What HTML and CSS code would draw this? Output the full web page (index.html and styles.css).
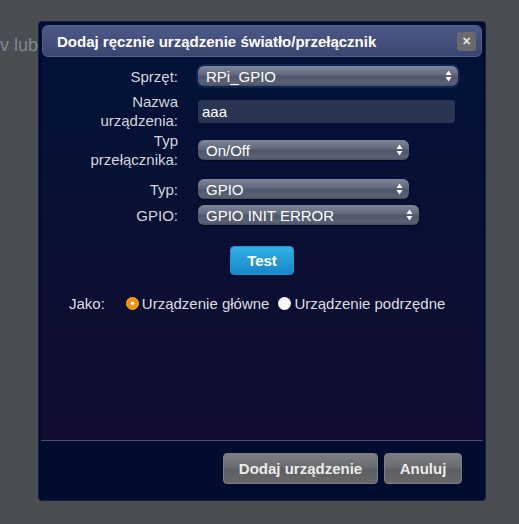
FILE: index.html
```html
<!DOCTYPE html>
<html lang="pl">
<head>
<meta charset="utf-8">
<title>Dodaj urządzenie</title>
<link rel="stylesheet" href="styles.css">
</head>
<body>
<div class="backdrop-text">v lub</div>
<div class="dialog">
  <div class="titlebar">
    <span class="title">Dodaj ręcznie urządzenie światło/przełącznik</span>
    <span class="close">✕</span>
  </div>
  <div class="content">
    <div class="form">
      <div class="row r1">
        <div class="label">Sprzęt:</div>
        <div class="select focus w-long"><span>RPi_GPIO</span><svg class="arrows" width="7" height="12" viewBox="0 0 7 12"><path d="M3.5 0.5 L6.5 5 H0.5Z M3.5 11.5 L6.5 7 H0.5Z" fill="#fff"/></svg></div>
      </div>
      <div class="row r2">
        <div class="label">Nazwa<br>urządzenia:</div>
        <div class="input">aaa</div>
      </div>
      <div class="row r3">
        <div class="label">Typ<br>przełącznika:</div>
        <div class="select w-mid"><span>On/Off</span><svg class="arrows" width="7" height="12" viewBox="0 0 7 12"><path d="M3.5 0.5 L6.5 5 H0.5Z M3.5 11.5 L6.5 7 H0.5Z" fill="#fff"/></svg></div>
      </div>
      <div class="row r4">
        <div class="label">Typ:</div>
        <div class="select w-mid"><span>GPIO</span><svg class="arrows" width="7" height="12" viewBox="0 0 7 12"><path d="M3.5 0.5 L6.5 5 H0.5Z M3.5 11.5 L6.5 7 H0.5Z" fill="#fff"/></svg></div>
      </div>
      <div class="row r5">
        <div class="label">GPIO:</div>
        <div class="select w-gpio"><span>GPIO INIT ERROR</span><svg class="arrows" width="7" height="12" viewBox="0 0 7 12"><path d="M3.5 0.5 L6.5 5 H0.5Z M3.5 11.5 L6.5 7 H0.5Z" fill="#fff"/></svg></div>
      </div>
    </div>
    <div class="test-wrap"><button class="btn-test">Test</button></div>
    <div class="jako">
      <span class="jako-label">Jako:</span>
      <span class="radio on"></span><span class="opt">Urządzenie główne</span>
      <span class="radio off"></span><span class="opt">Urządzenie podrzędne</span>
    </div>
  </div>
  <div class="footer">
    <button class="btn">Dodaj urządzenie</button>
    <button class="btn">Anuluj</button>
  </div>
</div>
</body>
</html>
```
FILE: styles.css
```css
html, body {
  margin: 0;
  padding: 0;
}
body {
  background: #4a4d52;
  width: 519px;
  height: 524px;
  overflow: hidden;
  font-family: "Liberation Sans", Arial, sans-serif;
  position: relative;
}
.backdrop-text {
  position: absolute;
  left: 0;
  top: 35px;
  font-size: 18px;
  color: #85888d;
}
.dialog {
  position: absolute;
  left: 38px;
  top: 21px;
  width: 448px;
  height: 480px;
  box-sizing: border-box;
  background: #000c30;
  border: 1px solid #1a1d3e;
  border-radius: 4px;
  display: flex;
  flex-direction: column;
}
.titlebar {
  margin: 3px 3px 0 3px;
  height: 32px;
  box-sizing: border-box;
  border: 1px solid #56608a;
  border-radius: 6px;
  background: linear-gradient(#4c5986, #3b4572);
  display: flex;
  align-items: center;
  justify-content: space-between;
  padding: 0 5px 0 14px;
}
.title {
  color: #fff;
  font-weight: bold;
  font-size: 15px;
}
.close {
  width: 19px;
  height: 19px;
  border-radius: 3px;
  background: #6a6a6d;
  color: #e6e6e6;
  font-size: 11px;
  font-weight: bold;
  display: flex;
  align-items: center;
  justify-content: center;
}
.content {
  flex: 1;
  margin: 0 2px;
  background: linear-gradient(#011238, #0a0f33 50%, #110d2f);
  border-bottom: 1px solid #4a5070;
}
.form {
  display: flex;
  flex-direction: column;
  padding-top: 9px;
}
.row {
  display: flex;
  align-items: center;
  column-gap: 20px;
}
.r2 { margin-top: 6px; }
.r3 { margin-top: 1px; }
.r4 { margin-top: 10px; }
.r5 { margin-top: 6px; }
.label {
  width: 137px;
  text-align: right;
  color: #d4d6dc;
  font-size: 15px;
  line-height: 19px;
}
.select {
  height: 20px;
  box-sizing: border-box;
  border-radius: 6px;
  background: linear-gradient(#80869a 0%, #646b7f 40%, #4f566b 55%, #5b6275 85%, #4a5064 100%);
  box-shadow: 0 1px 2px rgba(0, 0, 0, 0.7);
  color: #fff;
  font-size: 15px;
  display: flex;
  align-items: center;
  justify-content: space-between;
  padding: 0 6px 0 8px;
}
.select.focus {
  box-shadow: 0 0 0 2px #0c2250, 0 1px 2px rgba(0, 0, 0, 0.7);
}
.w-long { width: 260px; }
.w-mid { width: 211px; }
.w-gpio { width: 221px; }
.input {
  width: 257px;
  height: 23px;
  box-sizing: border-box;
  border-radius: 4px;
  background: #2a3453;
  color: #fff;
  font-size: 15px;
  padding: 0 4px;
  display: flex;
  align-items: center;
}
.test-wrap {
  display: flex;
  justify-content: center;
  margin-top: 21px;
}
.btn-test {
  width: 64px;
  height: 29px;
  border: 1px solid #2294d0;
  border-radius: 4px;
  background: linear-gradient(#2fb1e4, #1a86c9);
  color: #fff;
  font-family: "Liberation Sans", Arial, sans-serif;
  font-weight: bold;
  font-size: 15px;
  padding: 0;
}
.jako {
  display: flex;
  align-items: center;
  margin-top: 20px;
  padding-left: 28px;
  color: #dcdde2;
  font-size: 15px;
}
.jako-label {
  margin-right: 21px;
}
.radio {
  width: 13px;
  height: 13px;
  border-radius: 50%;
  box-sizing: border-box;
  margin-right: 3px;
}
.radio.on {
  background: radial-gradient(circle, #fff 0 1.6px, #f39200 2.2px);
  border: 1px solid #ffb040;
}
.radio.off {
  background: #fafafa;
  margin-left: 9px;
}
.footer {
  height: 59px;
  display: flex;
  justify-content: flex-end;
  align-items: flex-start;
  gap: 6px;
  padding: 12px 23px 0 0;
  box-sizing: border-box;
}
.btn {
  height: 31px;
  border: 1px solid #7c7e82;
  border-radius: 4px;
  background: linear-gradient(#7b7d80 0%, #6a6c6f 45%, #5c5e61 55%, #666869 100%);
  color: #ececec;
  font-family: "Liberation Sans", Arial, sans-serif;
  font-weight: bold;
  font-size: 15px;
  padding: 0 14px;
}
.footer .btn:first-child { width: 155px; }
.footer .btn:last-child { width: 78px; }
```
